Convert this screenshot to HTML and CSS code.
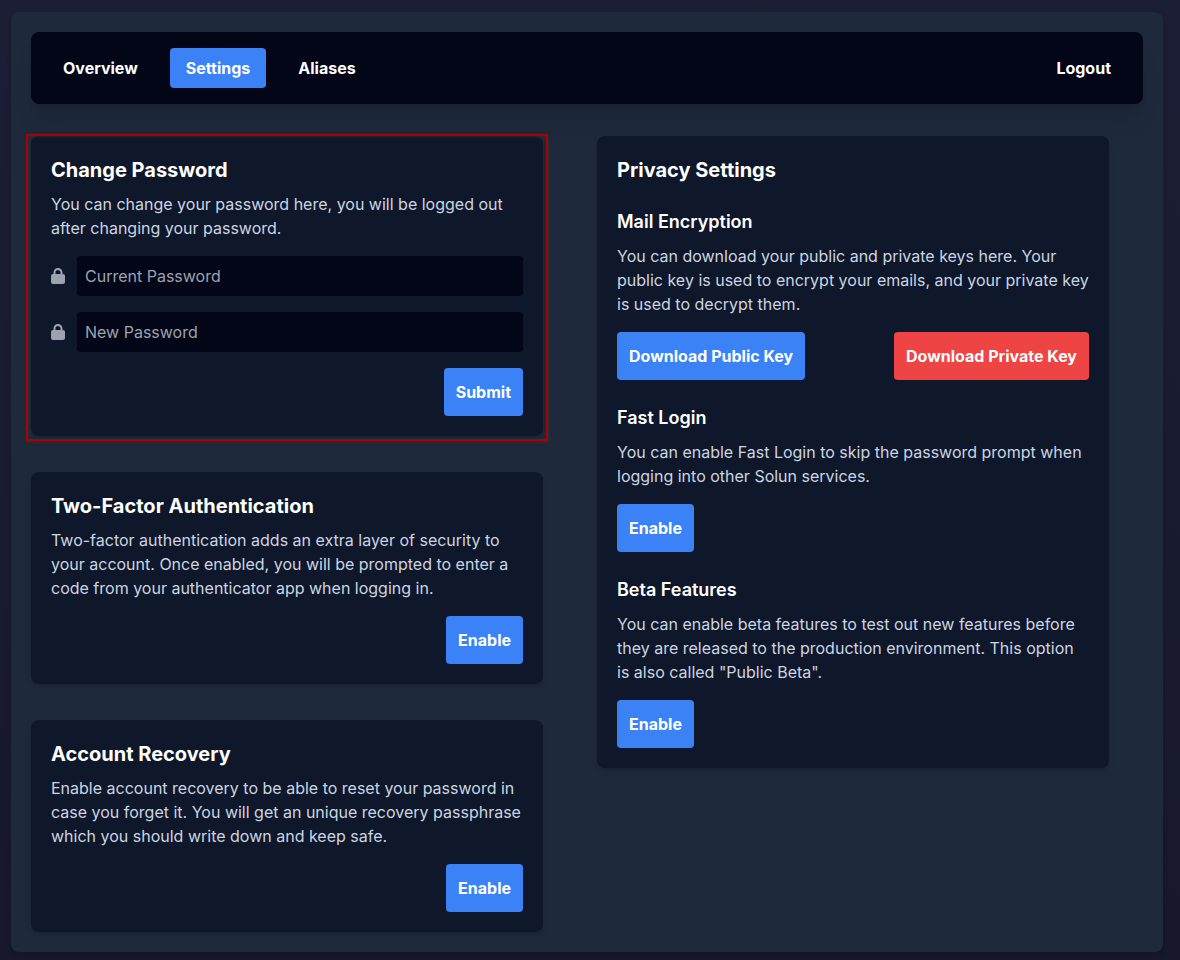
FILE: index.html
```html
<!DOCTYPE html>
<html lang="en">
<head>
<meta charset="utf-8">
<meta name="viewport" content="width=device-width, initial-scale=1">
<title>Account Settings</title>
<link rel="stylesheet" href="styles.css">
</head>
<body>
<main class="panel">
  <nav class="navbar">
    <a class="nav-link" href="#overview">Overview</a>
    <a class="nav-link active" href="#settings" aria-current="page">Settings</a>
    <a class="nav-link" href="#aliases">Aliases</a>
    <a class="nav-link logout" href="#logout">Logout</a>
  </nav>
  <div class="columns">
    <div class="column">
      <section class="card highlighted">
        <h2 class="card-title">Change Password</h2>
        <p class="text">You can change your password here, you will be logged out after changing your password.</p>
        <form class="form">
          <div class="field">
            <label class="field-label" for="current" aria-label="Current Password">
              <svg class="lock" viewBox="0 0 14 16" aria-hidden="true"><path fill-rule="evenodd" d="M2.5 6V4.5a4.5 4.5 0 0 1 9 0V6H12a2 2 0 0 1 2 2v6a2 2 0 0 1-2 2H2a2 2 0 0 1-2-2V8a2 2 0 0 1 2-2zM4.500 6h5V4.500a2.500 2.500 0 0 0-5 0z"/></svg>
            </label>
            <input class="input" id="current" type="password" placeholder="Current Password">
          </div>
          <div class="field">
            <label class="field-label" for="new" aria-label="New Password">
              <svg class="lock" viewBox="0 0 14 16" aria-hidden="true"><path fill-rule="evenodd" d="M2.5 6V4.5a4.5 4.5 0 0 1 9 0V6H12a2 2 0 0 1 2 2v6a2 2 0 0 1-2 2H2a2 2 0 0 1-2-2V8a2 2 0 0 1 2-2zM4.500 6h5V4.500a2.500 2.500 0 0 0-5 0z"/></svg>
            </label>
            <input class="input" id="new" type="password" placeholder="New Password">
          </div>
          <div class="actions end"><button class="button" type="submit">Submit</button></div>
        </form>
      </section>
      <section class="card">
        <h2 class="card-title">Two-Factor Authentication</h2>
        <p class="text">Two-factor authentication adds an extra layer of security to your account. Once enabled, you will be prompted to enter a code from your authenticator app when logging in.</p>
        <div class="actions end"><button class="button" type="button">Enable</button></div>
      </section>
      <section class="card">
        <h2 class="card-title">Account Recovery</h2>
        <p class="text">Enable account recovery to be able to reset your password in case you forget it. You will get an unique recovery passphrase which you should write down and keep safe.</p>
        <div class="actions end"><button class="button" type="button">Enable</button></div>
      </section>
    </div>
    <div class="column">
      <section class="card">
        <h2 class="card-title">Privacy Settings</h2>
        <div class="group">
          <h3 class="group-title">Mail Encryption</h3>
          <p class="text">You can download your public and private keys here. Your public key is used to encrypt your emails, and your private key is used to decrypt them.</p>
          <div class="actions spread">
            <button class="button" type="button">Download Public Key</button>
            <button class="button danger" type="button">Download Private Key</button>
          </div>
        </div>
        <div class="group">
          <h3 class="group-title">Fast Login</h3>
          <p class="text">You can enable Fast Login to skip the password prompt when logging into other Solun services.</p>
          <div class="actions"><button class="button" type="button">Enable</button></div>
        </div>
        <div class="group">
          <h3 class="group-title">Beta Features</h3>
          <p class="text">You can enable beta features to test out new features before they are released to the production environment. This option is also called "Public Beta".</p>
          <div class="actions"><button class="button" type="button">Enable</button></div>
        </div>
      </section>
    </div>
  </div>
</main>
</body>
</html>
```
FILE: styles.css
```css
* {
  box-sizing: border-box;
}

body {
  min-height: 100vh;
  margin: 0;
  padding: 12px 17px 8px 11px;
  background: linear-gradient(180deg, #1b1e34, #17182b);
  color: #fff;
  font: 16px/24px Inter, sans-serif;
}

h2,
h3,
p {
  margin: 0;
}

.panel {
  max-width: 1152px;
  margin: 0 auto;
  padding: 20px;
  border-radius: 8px;
  background: #1e293b;
  box-shadow: 0 4px 6px -1px rgba(0, 0, 0, 0.1), 0 2px 4px -2px rgba(0, 0, 0, 0.1);
}

.navbar {
  display: flex;
  gap: 16px;
  padding: 16px;
  border-radius: 8px;
  background: #020617;
  box-shadow: 0 20px 25px -5px rgba(0, 0, 0, 0.1), 0 8px 10px -6px rgba(0, 0, 0, 0.1);
}

.nav-link {
  padding: 8px 16px;
  border-radius: 4px;
  color: #fff;
  font-weight: 700;
  text-decoration: none;
}

.nav-link.active {
  background: #3b82f6;
}

.nav-link.logout {
  margin-left: auto;
}

.columns {
  display: grid;
  grid-template-columns: repeat(2, minmax(0, 1fr));
  gap: 20px;
  margin-top: 32px;
}

.column {
  display: flex;
  flex-direction: column;
  gap: 36px;
}

.card {
  position: relative;
  width: 100%;
  max-width: 512px;
  padding: 20px;
  border-radius: 8px;
  background: #0f172a;
  box-shadow: 0 4px 6px -1px rgba(0, 0, 0, 0.1), 0 2px 4px -2px rgba(0, 0, 0, 0.1);
}

.highlighted::after {
  content: "";
  position: absolute;
  inset: -2px -5px -5px;
  border: 2px solid #aa0000;
  box-shadow: 1px 1px 3px rgba(60, 60, 60, 0.5), inset 1px 1px 3px rgba(60, 60, 60, 0.5);
  pointer-events: none;
}

.card-title {
  margin-bottom: 8px;
  font-size: 20px;
  font-weight: 700;
  line-height: 28px;
}

.text {
  color: #cbd5e1;
}

.group {
  margin-top: 24px;
}

.group-title {
  margin-bottom: 8px;
  font-size: 18px;
  font-weight: 600;
  line-height: 28px;
}

.form,
.actions {
  margin-top: 16px;
}

.field {
  display: flex;
  align-items: center;
  gap: 12px;
  margin-bottom: 16px;
}

.field-label {
  display: flex;
}

.lock {
  width: 14px;
  height: 16px;
  fill: #9ca3af;
}

.input {
  flex: 1;
  min-width: 0;
  height: 40px;
  padding: 8px;
  border: 0;
  border-radius: 4px;
  background: #020617;
  color: #fff;
  font: inherit;
}

.input::placeholder {
  color: #9ca3af;
  opacity: 1;
}

.actions {
  display: flex;
  flex-wrap: wrap;
  gap: 12px;
}

.actions.end {
  justify-content: flex-end;
}

.actions.spread {
  justify-content: space-between;
}

.button {
  padding: 12px;
  border: 0;
  border-radius: 4px;
  background: #3b82f6;
  color: #fff;
  font: inherit;
  font-weight: 700;
  cursor: pointer;
}

.button.danger {
  background: #ef4444;
}
```
